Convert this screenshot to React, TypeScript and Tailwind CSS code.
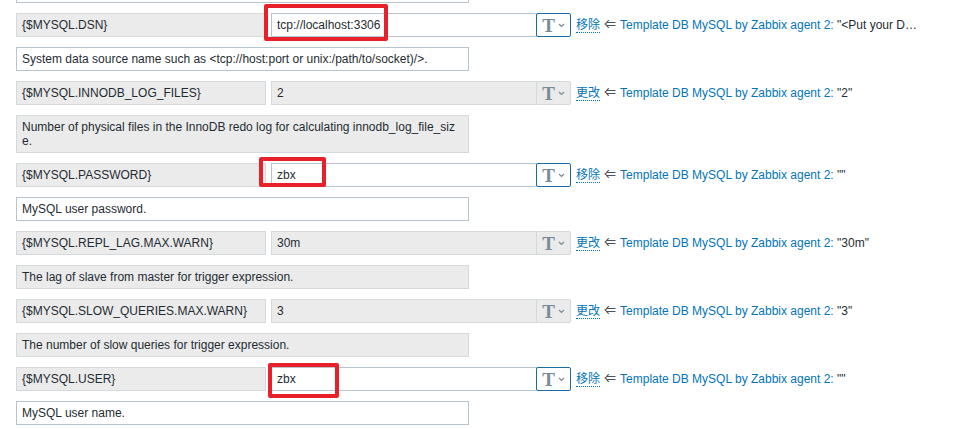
import React from "react";

type Row = {
  macro: string;
  value: string;
  editable: boolean;
  action: string;
  inherited: string;
  desc: string;
};

const rows: Row[] = [
  {
    macro: "{$MYSQL.DSN}",
    value: "tcp://localhost:3306",
    editable: true,
    action: "移除",
    inherited: "\"<Put your D…",
    desc: "System data source name such as <tcp://host:port or unix:/path/to/socket)/>.",
  },
  {
    macro: "{$MYSQL.INNODB_LOG_FILES}",
    value: "2",
    editable: false,
    action: "更改",
    inherited: "\"2\"",
    desc: "Number of physical files in the InnoDB redo log for calculating innodb_log_file_size.",
  },
  {
    macro: "{$MYSQL.PASSWORD}",
    value: "zbx",
    editable: true,
    action: "移除",
    inherited: "\"\"",
    desc: "MySQL user password.",
  },
  {
    macro: "{$MYSQL.REPL_LAG.MAX.WARN}",
    value: "30m",
    editable: false,
    action: "更改",
    inherited: "\"30m\"",
    desc: "The lag of slave from master for trigger expression.",
  },
  {
    macro: "{$MYSQL.SLOW_QUERIES.MAX.WARN}",
    value: "3",
    editable: false,
    action: "更改",
    inherited: "\"3\"",
    desc: "The number of slow queries for trigger expression.",
  },
  {
    macro: "{$MYSQL.USER}",
    value: "zbx",
    editable: true,
    action: "移除",
    inherited: "\"\"",
    desc: "MySQL user name.",
  },
];

function Chevron() {
  return (
    <svg width="7" height="5" viewBox="0 0 7 5" className="ml-[3px]">
      <path d="M1 1 L3.5 3.5 L6 1" fill="none" stroke="#768d99" strokeWidth="1.2" />
    </svg>
  );
}

function MacroRow({ r }: { r: Row }) {
  return (
    <>
      <div className="flex items-center h-6">
        <div className="w-[250px] h-6 border border-[#d3d9dd] bg-[#ebebeb] px-[5px] flex items-center shrink-0">
          {r.macro}
        </div>
        <div className="ml-[5px] flex h-6 shrink-0">
          <div
            className={
              r.editable
                ? "w-[266px] h-6 border border-[#b8c4cb] bg-white px-[5px] flex items-center"
                : "w-[266px] h-6 border border-[#d3d9dd] bg-[#ebebeb] px-[5px] flex items-center"
            }
          >
            {r.value}
          </div>
          <div
            className={
              r.editable
                ? "-ml-px w-[35px] h-6 border border-[#1a6aa6] rounded-[2px] bg-white flex items-center justify-center"
                : "-ml-px w-[35px] h-6 border border-[#d3d9dd] rounded-[2px] bg-[#ebebeb] flex items-center justify-center"
            }
          >
            <span className="font-['Liberation_Serif',serif] font-bold text-[19px] leading-none text-[#768d99]">T</span>
            <Chevron />
          </div>
        </div>
        <div className="ml-[5px] flex items-center whitespace-nowrap">
          <span className="text-[#0275b8] border-b border-dotted border-[#0275b8] leading-[14px] font-['Liberation_Sans','Noto_Sans_CJK_SC',sans-serif]">
            {r.action}
          </span>
          <span className="ml-[4px] mr-[4px] text-[#1f2c33]">⇐</span>
          <span className="text-[#0275b8] whitespace-pre">Template DB MySQL by Zabbix agent 2: </span>
          <span className="text-[#1f2c33]">{r.inherited}</span>
        </div>
      </div>
      <div
        className={
          r.editable
            ? "w-[453px] border border-[#b8c4cb] bg-white px-[5px] py-[4px] leading-[14px] break-all"
            : "w-[453px] border border-[#d3d9dd] bg-[#ebebeb] px-[5px] py-[4px] leading-[14px] break-all"
        }
      >
        {r.desc}
      </div>
    </>
  );
}

export default function App() {
  return (
    <div className="relative w-[955px] h-[429px] overflow-hidden bg-white text-[12px] text-[#1f2c33] font-['Liberation_Sans','Noto_Sans_CJK_SC',sans-serif]">
      <div className="pl-4 flex flex-col gap-[10px]">
        <div className="w-[453px] h-[3px] border-x border-b border-[#b8c4cb] bg-white" />
        {rows.map((r) => (
          <MacroRow key={r.macro} r={r} />
        ))}
      </div>
      <div className="absolute left-[264px] top-[4px] w-[124px] h-[37px] border-4 border-[#e8202a] rounded-[2px]" />
      <div className="absolute left-[259px] top-[157px] w-[67px] h-[30px] border-4 border-[#e8202a] rounded-[2px]" />
      <div className="absolute left-[268px] top-[363px] w-[71px] h-[35px] border-4 border-[#e8202a] rounded-[2px]" />
    </div>
  );
}
